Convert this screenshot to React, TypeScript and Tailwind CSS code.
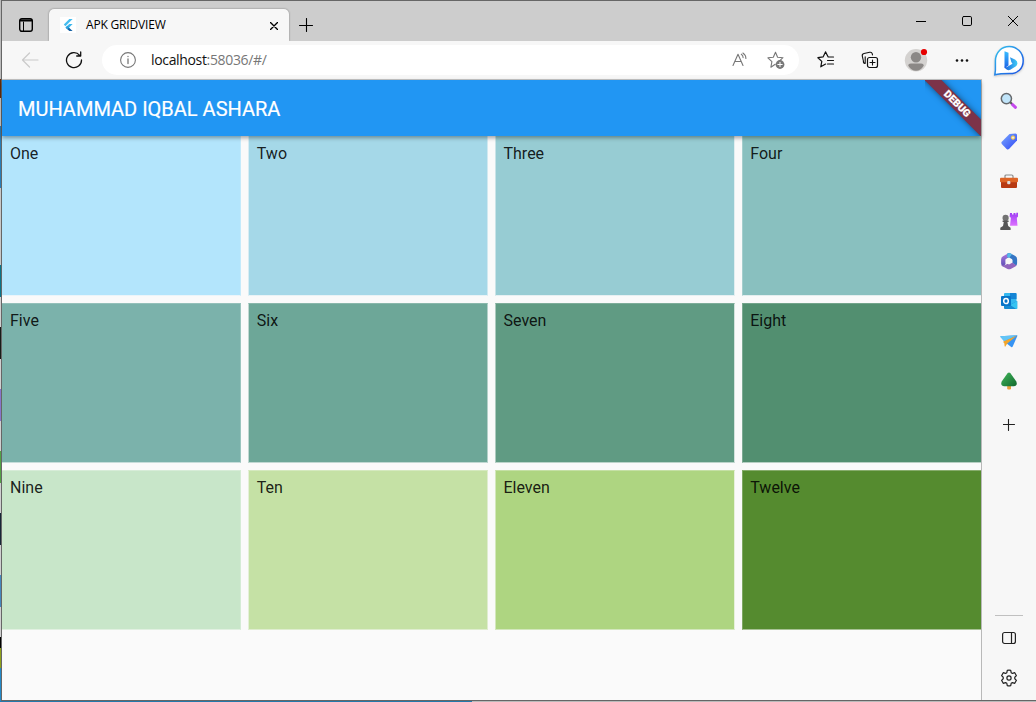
import React from "react";

const tiles = [
  { label: "One", color: "bg-[#b3e5fc]" },
  { label: "Two", color: "bg-[#a5d8e8]" },
  { label: "Three", color: "bg-[#97ccd3]" },
  { label: "Four", color: "bg-[#89c0bf]" },
  { label: "Five", color: "bg-[#7bb2ab]" },
  { label: "Six", color: "bg-[#6da798]" },
  { label: "Seven", color: "bg-[#609b83]" },
  { label: "Eight", color: "bg-[#528f70]" },
  { label: "Nine", color: "bg-[#c8e6c9]" },
  { label: "Ten", color: "bg-[#c5e1a5]" },
  { label: "Eleven", color: "bg-[#aed581]" },
  { label: "Twelve", color: "bg-[#558b2f]" },
];

// Soft tile edges, one entry per column and per row.
const columnEdges = [
  "border-r border-r-[#fafafa]/25 pl-2",
  "border-x border-l-[#fafafa]/60 border-r-[#fafafa]/50 pl-[7.75px]",
  "border-x border-l-[#fafafa]/50 border-r-[#fafafa]/75 pl-[7.5px]",
  "border-l border-l-[#fafafa]/25 pl-[7.25px]",
];
const rowEdges = [
  "border-b border-b-[#fafafa]/80 pt-2",
  "border-y border-t-[#fafafa]/20 border-b-[#fafafa]/60 pt-[7px]",
  "border-y border-t-[#fafafa]/30 border-b-[#fafafa]/50 pt-[7px]",
];

type IconProps = { children: React.ReactNode; size?: number; box?: string; className?: string };

function Icon({ children, size = 18, box, className = "" }: IconProps) {
  return (
    <svg
      width={size}
      height={size}
      viewBox={box ?? `0 0 ${size} ${size}`}
      fill="none"
      stroke="currentColor"
      strokeWidth="1.2"
      strokeLinecap="round"
      strokeLinejoin="round"
      className={`shrink-0 ${className}`}
    >
      {children}
    </svg>
  );
}

function TitleBar() {
  return (
    <header className="flex h-10 shrink-0 items-start bg-[#cdcdcd] text-black">
      <div className="flex h-full w-[47px] shrink-0 pt-[17px] pl-[17px]">
        <Icon size={14}>
          <rect x=".7" y=".7" width="12.6" height="12.6" rx="2.2" strokeWidth="1.4" />
          <path d="M1.5 2.5h11" strokeWidth="2" />
          <path d="M4.5 4v9" strokeWidth="1" />
        </Icon>
      </div>
      <div className="mt-2 flex h-8 w-[240px] shrink-0 items-center rounded-t-[5px] bg-[#f7f7f7] pl-[11px] shadow-[0_0_2px_rgba(0,0,0,.45)] [clip-path:inset(-3px_-3px_0_-3px)]">
        <div className="flex size-4 items-center justify-center bg-white">
          <svg width="16" height="16" viewBox="0 0 16 16">
            <path d="M9.3 2H12.6L5.4 9.2 3.8 7.6z" fill="#45bdf0" />
            <path d="M9.3 7H12.6L8.2 11.5 5.6 10.6z" fill="#3bb6ec" />
            <path d="M7.4 9.2l1.7 1.6 3.5 3.2H9.3L5.6 10.6z" fill="#1561a3" />
            <path d="M5.6 10.6L7.4 8.8l1.8 1.8-1.8 1.8z" fill="#29a3e0" />
          </svg>
        </div>
        <span className="ml-[10px] w-[184px] whitespace-nowrap text-[12px] leading-4 tracking-[-0.18px] font-['Open_Sans',sans-serif]">
          APK GRIDVIEW
        </span>
        <Icon size={8} className="mt-[2px]">
          <path d="M.5.5l7 7M7.5.5l-7 7" strokeWidth="1.4" />
        </Icon>
      </div>
      <Icon size={14} className="mt-[17px] ml-[10px]">
        <path d="M7.5.5v13M.5 7.5h13" strokeWidth="1.1" />
      </Icon>
      <div className="mt-[15px] mr-[18px] ml-auto flex gap-9">
        <Icon size={10}>
          <path d="M0 5.5h10" strokeWidth="1" strokeLinecap="butt" />
        </Icon>
        <Icon size={10}>
          <rect x=".5" y=".5" width="9" height="9" rx="1.3" strokeWidth="1" />
        </Icon>
        <Icon size={10}>
          <path d="M.3.3l9.4 9.4M9.7.3L.3 9.7" strokeWidth="1" />
        </Icon>
      </div>
    </header>
  );
}

function Toolbar() {
  return (
    <div className="flex h-[38px] shrink-0 items-center bg-[#f7f7f7] text-[#111]">
      <Icon size={18} className="ml-[19px] text-[#cacaca]">
        <path d="M17 9H1.5M8.5 2L1.5 9l7 7" />
      </Icon>
      <Icon size={18} className="ml-[26px]">
        <path d="M14.7 4.3A7.5 7.5 0 1 0 16.5 9M15.7 1v4h-4" strokeWidth="1.3" />
      </Icon>
      <div className="ml-[19px] flex h-[30px] w-[697px] items-center rounded-full bg-white pr-[14px] pl-[18px] text-[#777]">
        <Icon size={16}>
          <circle cx="8" cy="8" r="7.4" strokeWidth="1.1" />
          <path d="M8 7v4.5M8 4.3v.3" strokeWidth="1.3" />
        </Icon>
        <span className="ml-[15px] text-[14px] leading-5 tracking-[-0.34px] font-['Open_Sans',sans-serif] text-[#777]">
          <span className="text-[#111]">localhost</span>:58036/#/
        </span>
        <Icon size={18} className="ml-auto">
          <path d="M2 14.5L7 3.2l5 11.3M3.8 10.5h6.4M10.3 3.2a4 4 0 0 1 1.8 3.4M11.9 2a6.7 6.7 0 0 1 3 5.4" strokeWidth="1.1" />
        </Icon>
        <Icon size={18} className="ml-[18px]">
          <path d="M8.5 1.2l2.1 5 5.4.5-4 3.6M8.2 13.3l-4.3 2.9 1-5.5-4-3.9 5.4-.6L8.5 1.2" strokeWidth="1.1" />
          <circle cx="13" cy="13.5" r="4.4" fill="#777" stroke="none" />
          <path d="M13 11.3v4.4M10.8 13.5h4.4" stroke="white" strokeWidth="1" />
        </Icon>
      </div>
      <Icon size={18} className="ml-[18px]">
        <path d="M16.5 6h-5.3L8.5.9 6.2 5.8.9 6.7l3.9 3.7-1 5.4 4.8-2.7M10.5 9.5h6M10.5 13h6" strokeWidth="1.2" />
      </Icon>
      <Icon size={18} className="ml-[26px]">
        <rect x="6.5" y="6.5" width="10" height="10" rx="2" strokeWidth="1.2" />
        <path d="M11.5 9v5M9 11.5h5M4 12.5A2.2 2.2 0 0 1 2.4 10L1.3 5.1A2.2 2.2 0 0 1 3 2.5l5.7-1.2a2.2 2.2 0 0 1 2.6 1.6l.2 1M4.2 12.3V5.9" strokeWidth="1.1" />
      </Icon>
      <Icon size={24} className="ml-[25px]">
        <circle cx="12" cy="12.3" r="11.2" fill="#d4d2d0" stroke="none" />
        <circle cx="12" cy="9.3" r="5.2" fill="#8b8886" stroke="none" />
        <path d="M4.3 17.8Q4.3 15.6 7 15.6H17q2.7 0 2.7 2.2-3 5-7.7 5t-7.7-5z" fill="#8b8886" stroke="none" />
        <circle cx="20" cy="4" r="3.1" fill="#e60000" stroke="none" />
      </Icon>
      <Icon size={16} className="ml-[26px]">
        <g fill="currentColor" stroke="none">
          <circle cx="3" cy="8.5" r="1.3" />
          <circle cx="8" cy="8.5" r="1.3" />
          <circle cx="13" cy="8.5" r="1.3" />
        </g>
      </Icon>
    </div>
  );
}

function DebugBanner() {
  return (
    <div className="absolute top-0 right-0 h-14 w-14 overflow-hidden">
      <div className="absolute top-[18px] left-[-28px] flex h-3 w-[120px] rotate-45 items-center justify-center bg-[#7c3349] text-[10.2px] leading-none font-black text-white shadow-[0_0_6px_rgba(0,0,0,.5)] font-['Roboto',sans-serif]">
        DEBUG
      </div>
    </div>
  );
}

function GridPage() {
  return (
    <main className="flex min-h-0 flex-1 flex-col bg-[#fafafa] font-['Roboto',sans-serif]">
      <div className="relative z-10 flex h-14 shrink-0 items-center bg-[#2196f3] pt-0.5 pl-4 text-[20px] font-normal text-white shadow-[0_2px_4px_rgba(0,0,0,.35)] [-webkit-text-stroke:0.2px_white]">
        MUHAMMAD IQBAL ASHARA
        <DebugBanner />
      </div>
      <div className="grid grid-cols-[239px_240px_240px_239px] grid-rows-[160px_160px_160px] gap-[7px]">
        {tiles.map((tile, i) => (
          <div
            key={tile.label}
            className={`text-[16px] leading-[19px] text-black/87 ${tile.color} ${columnEdges[i % 4]} ${rowEdges[Math.floor(i / 4)]}`}
          >
            {tile.label}
          </div>
        ))}
      </div>
    </main>
  );
}

function Defs() {
  return (
    <defs>
      <linearGradient id="bing" x2="1" y2="1">
        <stop stopColor="#35c4ed" />
        <stop offset="1" stopColor="#174ae4" />
      </linearGradient>
      <linearGradient id="bingStem" x2="0" y2="1">
        <stop stopColor="#37bdff" />
        <stop offset="1" stopColor="#1b62e8" />
      </linearGradient>
      <linearGradient id="bingBowl" x2="1" y2="0">
        <stop stopColor="#1a5fe0" />
        <stop offset="1" stopColor="#3fcdf5" />
      </linearGradient>
      <linearGradient id="tag" x2="1" y2="1">
        <stop stopColor="#7caaff" />
        <stop offset="1" stopColor="#3048f5" />
      </linearGradient>
      <linearGradient id="office" x2="0" y2="1">
        <stop stopColor="#b079e0" />
        <stop offset="1" stopColor="#5a4fb5" />
      </linearGradient>
      <linearGradient id="rook" x2="0" y2="1">
        <stop stopColor="#9e3cf5" />
        <stop offset="1" stopColor="#dd73ff" />
      </linearGradient>
      <linearGradient id="tree" x2="1" y2="1">
        <stop stopColor="#42b75b" />
        <stop offset="1" stopColor="#11692e" />
      </linearGradient>
    </defs>
  );
}

function Sidebar() {
  return (
    <aside className="flex w-[54px] shrink-0 flex-col items-center bg-[#f7f7f7] pt-1 text-[#222]">
      <svg width="32" height="32" viewBox="0 0 32 32" className="shrink-0 drop-shadow-[0_1px_1px_rgba(0,0,0,.2)]">
        <Defs />
        <path d="M1.8 29.8l.6-4.5V15.5C2.7 7.3 8.5 1.5 16.2 1.5s14 6.1 14 14.2S24.4 28.6 16.7 28.6c-3.8 0-10 0-14.9 1.2z" fill="#fff" stroke="url(#bing)" strokeWidth="1.5" />
        <path d="M11.5 6.2l4 1.6v12.8l-4 2.7z" fill="url(#bingStem)" />
        <path d="M17 12.2l5 2.2q2.6 1.3 2.4 4.4-.2 1.8-1.8 2.8l-5.3 3.2q-1.6.9-3.3 0-2.5-1.2-2.5-3.2l2 .6 6-3.5-1.2-1.6z" fill="url(#bingBowl)" />
      </svg>
      <div className="mt-[14px] flex flex-col gap-5">
        <svg width="20" height="20" viewBox="0 0 20 20">
          <path d="M13.3 13.3l3.2 3" stroke="#c549ed" strokeWidth="3" strokeLinecap="round" />
          <path d="M10.5 10.5l2.3 2.3" stroke="#555" strokeWidth="2" />
          <circle cx="7.4" cy="7.6" r="5.1" fill="#c1e5fa" stroke="#66696c" strokeWidth="1.5" />
        </svg>
        <svg width="20" height="20" viewBox="0 0 20 20">
          <path d="M10.5 3l6-.6q1.5 0 1.5 1.5v5.6L10 18q-1.2 1-2.4-.1L2.8 13q-1.1-1.2 0-2.3z" fill="url(#tag)" />
          <circle cx="14" cy="6.6" r="1.7" fill="#e9e8ed" stroke="#ffc82e" />
        </svg>
        <svg width="20" height="20" viewBox="0 0 20 20">
          <path d="M6 7V5.2Q6 4 7.3 4h5.4Q14 4 14 5.2V7" fill="none" stroke="#8b8b8b" strokeWidth="1.2" />
          <rect x="2" y="9" width="16" height="8" rx="1" fill="#b73a13" />
          <rect x="1" y="6.8" width="18" height="4.4" rx="1" fill="#dd6426" />
          <rect x="8.2" y="10" width="3.2" height="3.2" rx="1" fill="#dedede" />
        </svg>
        <svg width="20" height="20" viewBox="0 0 20 20">
          <path d="M11 2h2v1.5h1.5V2h2v1.5H17.3V1.8H19v4l-1.2 1 .7 8H11l.9-8L10.6 5.8z" fill="url(#rook)" />
          <circle cx="6.6" cy="6.9" r="3.1" fill="#737373" />
          <path d="M3.6 9.5h6v1.4H8.4l.8 4 2.4 1.8V19H1.3v-2.3L4 14.9l.8-4H3.6z" fill="#565656" />
        </svg>
        <svg width="20" height="20" viewBox="0 0 20 20">
          <path d="M10.3 1.8L4 5.2Q2.1 6.3 2.1 8.5v4q0 2.6 2.5 3.1L6.5 13V8.5l4-2.7z" fill="url(#office)" />
          <path d="M8.5 2.4q1.6-1 3.2 0L16.3 5q1.8 1.1 1.8 3.3v3.9q0 1.5-1.1 2.5L13.4 12V9L8 6z" fill="#3576c4" />
          <path d="M8.5 2.4q1.6-1 3.2 0L13 3.2 10.2 7 8 6z" fill="#55b8e8" />
          <path d="M2.5 13.5q1.8 1.4 3.5.5L12.5 11l5 3.4q-.5.6-1.2 1l-4.6 2.5q-1.6.9-3.2 0L4 15.5q-1.2-.7-1.5-2z" fill="#9166be" />
          <path d="M10 6.4l3.2 1.8v3.6L10 13.6l-3.2-1.8V8.2z" fill="#f7f7f7" />
        </svg>
        <svg width="20" height="20" viewBox="0 0 20 20">
          <rect x="5" y="2" width="12.5" height="11" rx="1" fill="#35b8ef" />
          <path d="M11 2h5.5q1 0 1 1v5H11z" fill="#1585d5" />
          <path d="M5 10l6.5 3.5L18.2 10v7q0 1-1 1H6q-1 0-1-1z" fill="#168bd2" />
          <path d="M18.2 10l-7 4 6 4h1z" fill="#36c4f2" />
          <rect x="2" y="5" width="10" height="10" rx="1" fill="#0875c8" />
          <ellipse cx="7" cy="10" rx="2.3" ry="2.6" fill="none" stroke="white" strokeWidth="1.5" />
        </svg>
        <svg width="20" height="20" viewBox="0 0 20 20">
          <path d="M1.4 5.2l16.6-.9q.6 0 .3.7l-4.6 10.6q-.5 1-1.5.4L5.5 10.8z" fill="#3794f3" />
          <path d="M1.4 5.2l16.6-.9L5.5 10.2Q3.5 8.7 1 5.8z" fill="#63c5f6" />
          <path d="M4 10.8L18 4.5 8.3 12.6 6 16q-.8-1.7-.6-3.6z" fill="#f3a52a" />
        </svg>
        <svg width="20" height="20" viewBox="0 0 20 20">
          <path d="M8.2 14h3.8v4q-1.9 1-3.8 0z" fill="#e7a13c" />
          <path d="M8.7 2q1.3-1 2.6 0l6 8.5q1.7 4-2.3 4.8H5q-4-.8-2.3-4.8z" fill="url(#tree)" />
        </svg>
      </div>
      <Icon size={12} className="mt-[28px]">
        <path d="M5.5 0v11.5M0 5.5h11.5" strokeWidth="1.1" />
      </Icon>
      <div className="mt-auto h-px w-7 bg-[#c0c0c0]" />
      <Icon size={14} className="mt-[15px]">
        <rect x=".6" y="1.5" width="12.8" height="11" rx="2" />
        <path d="M9.5 1.5v11" />
      </Icon>
      <Icon size={18} box="0 0 24 24" className="mt-[24px] mb-[13px]">
        <path d="M9.7 1.8q2.3-.5 4.6 0l.6 3.1 1.7 1 3.1-1 2.2 4-2.2 2.1v2l2.2 2.1-2.2 4-3.1-1-1.7 1-.6 3.1q-2.3.5-4.6 0l-.6-3.1-1.7-1-3.1 1-2.2-4L4.3 13v-2L2.1 8.9l2.2-4 3.1 1 1.7-1z" strokeWidth="1.6" />
        <circle cx="12" cy="12" r="2.8" strokeWidth="1.6" />
      </Icon>
    </aside>
  );
}

export default function App() {
  return (
    <div className="flex h-[702px] w-[1036px] flex-col overflow-hidden bg-[#cdcdcd]">
      <div className="flex min-h-0 flex-1">
        <div className="flex w-px shrink-0 flex-col">
          <div className="h-[79px] bg-[#bcbcbc]" />
          <div className="h-[19px] bg-[#642b0a]" />
          <div className="h-7 bg-[#c8c8c8]" />
          <div className="h-[62px] bg-[#287eb8]" />
          <div className="h-[77px] bg-[#c8c8c8]" />
          <div className="h-[32px] bg-[#0a7588]" />
          <div className="h-[30px] bg-[#d0d0d0]" />
          <div className="h-8 bg-[#171b17]" />
          <div className="h-[30px] bg-[#d0d0d0]" />
          <div className="h-8 bg-[#8874ca]" />
          <div className="h-[30px] bg-[#d0d0d0]" />
          <div className="h-8 bg-[#52a144]" />
          <div className="h-[30px] bg-[#d0d0d0]" />
          <div className="h-8 bg-[#172636]" />
          <div className="h-[30px] bg-[#d0d0d0]" />
          <div className="h-8 bg-[#4688be]" />
          <div className="h-[30px] bg-[#d0d0d0]" />
          <div className="h-[11px] bg-black" />
          <div className="h-5 bg-[#8fa11b]" />
          <div className="flex-1 bg-[#248ac8]" />
        </div>
        <div className="flex min-w-0 flex-1 flex-col border-t border-b border-l border-[#666]">
          <TitleBar />
          <div className="flex min-h-0 flex-1">
            <div className="flex w-[980px] shrink-0 flex-col bg-[#f7f7f7]">
              <Toolbar />
              <div className="h-px shrink-0 bg-[#c4c4c4]" />
              <div className="flex min-h-0 flex-1 flex-col border-r border-[#b9b9b9]">
                <GridPage />
              </div>
            </div>
            <Sidebar />
          </div>
        </div>
      </div>
      <div className="flex h-px shrink-0">
        <div className="w-[472px] bg-[#2478ab]" />
        <div className="flex-1 bg-[#bababa]" />
      </div>
    </div>
  );
}
